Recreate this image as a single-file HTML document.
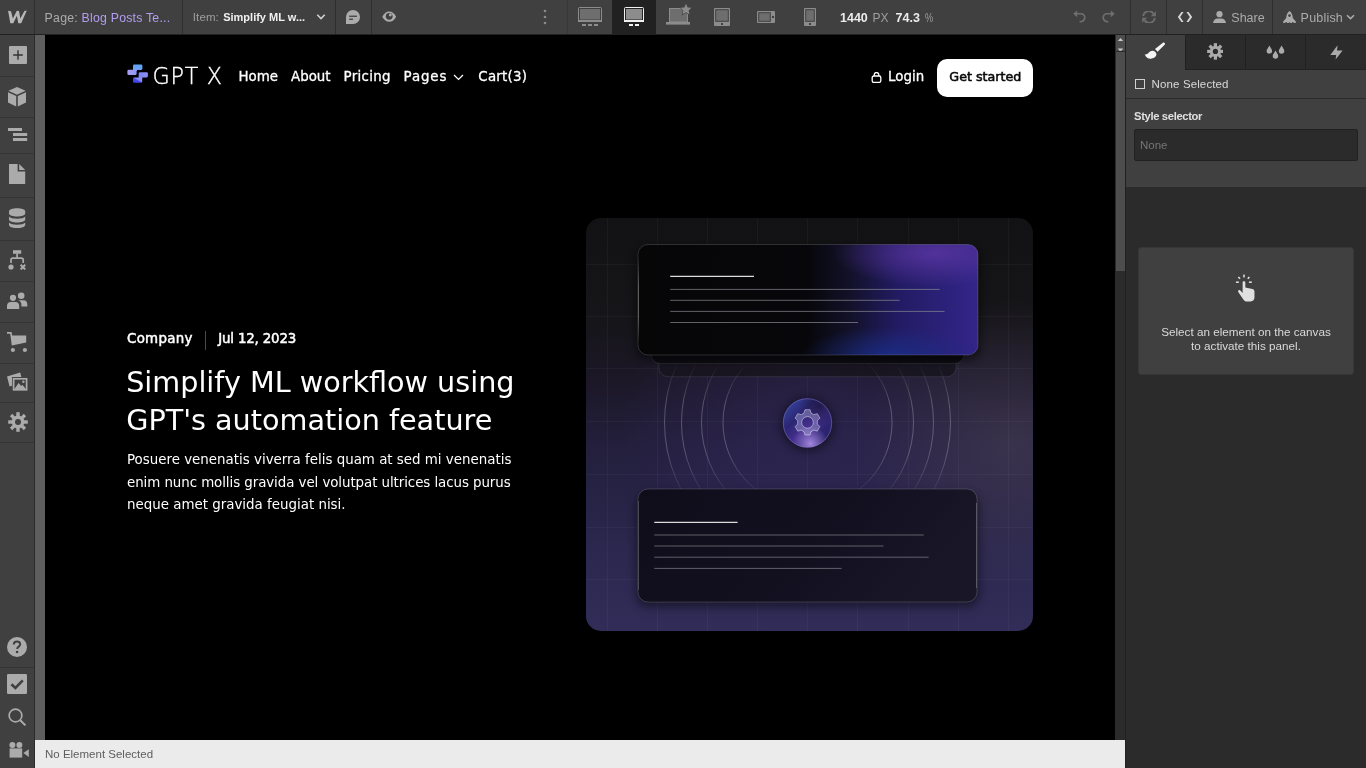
<!DOCTYPE html>
<html lang="en">
<head>
<meta charset="utf-8">
<title>Webflow Designer - Blog Posts Template</title>
<style>
*{box-sizing:border-box;margin:0;padding:0}
html,body{width:1366px;height:768px;overflow:hidden;background:#404040;font-family:"Liberation Sans",sans-serif;-webkit-font-smoothing:antialiased}
.abs{position:absolute}
#app{will-change:transform;position:relative;width:1366px;height:768px;overflow:hidden;background:#404040}
/* top bar */
#topbar{position:absolute;left:0;top:0;width:1366px;height:35px;background:#404040;border-bottom:1px solid #212121;z-index:5}
#topbar .sep{position:absolute;top:0;width:1px;height:34px;background:#2e2e2e}
#topbar .mid{position:absolute;left:372px;top:0;width:740px;height:34px;background:#464646}
.tb-text{position:absolute;top:0;height:34px;line-height:34px;font-size:13px;color:#d9d9d9;white-space:nowrap}
/* left bar */
#leftbar{position:absolute;left:0;top:35px;width:35px;height:733px;background:#404040;border-right:1px solid #2b2b2b;z-index:4}
#leftbar .div{position:absolute;left:0;width:34px;height:1px;background:#353535}
#leftbar svg{position:absolute}
#gutter{position:absolute;left:35px;top:35px;width:10px;height:705px;background:#5e5e5e}
/* canvas */
#canvas{position:absolute;left:45px;top:35px;width:1070px;height:705px;background:#000;overflow:hidden}
.site{font-family:"Liberation Sans",sans-serif;color:#fff}
.nav{top:30px;height:24px;line-height:24px;font-family:"DejaVu Sans",sans-serif;font-size:13.4px;color:#fff;white-space:nowrap;-webkit-text-stroke:0.3px #fff}
.meta{top:293px;height:22px;line-height:22px;font-family:"DejaVu Sans",sans-serif;font-size:13.4px;color:#fff;white-space:nowrap;-webkit-text-stroke:0.5px #fff}
/* scrollbar */
#vscroll{position:absolute;left:1115px;top:35px;width:11px;height:705px;background:#2b2b2b;border-left:1px solid #2b2b2b;border-right:1px solid #212121}
/* bottom bar */
#bottombar{position:absolute;left:35px;top:740px;width:1090px;height:28px;background:#ebebeb;color:#5e5e5e;font-size:11.5px;line-height:28px;padding-left:10px;z-index:4}
/* right panel */
#right{position:absolute;left:1126px;top:35px;width:240px;height:733px;background:#2b2b2b}
</style>
</head>
<body>
<div id="app">
<div id="topbar">
  <!-- W logo -->
  <svg class="abs" style="left:7px;top:10px" width="21" height="14" viewBox="0 0 21 14"><path d="M1.1 0.8 L3.3 13.2 L6.3 13.2 L9.9 5.8 L11.3 13.2 L14.2 13.2 L19.8 0.6 L17.4 0.9 L13.3 8.4 L12.0 1.1 L9.8 0.8 L5.9 8.4 L4.0 1.2 Z" fill="#b8b8b8"/></svg>
  <div class="sep" style="left:34px"></div>
  <div class="tb-text" style="left:44.6px;top:0.5px;color:#ababab;font-size:12.3px;letter-spacing:0.25px">Page:</div>
  <div class="tb-text" style="left:81.6px;top:0.5px;color:#b39df0;font-size:12.3px;letter-spacing:0.22px">Blog Posts Te...</div>
  <div class="sep" style="left:182px"></div>
  <div class="tb-text" style="left:192.8px;color:#9e9e9e;font-size:11.5px;letter-spacing:0.1px">Item:</div>
  <div class="tb-text" style="left:223.2px;color:#f0f0f0;font-size:11px;font-weight:bold">Simplify ML w...</div>
  <svg class="abs" style="left:316px;top:13px" width="10" height="8" viewBox="0 0 10 8"><path d="M1.3 1.8 L5 5.5 L8.7 1.8" fill="none" stroke="#d0d0d0" stroke-width="1.6"/></svg>
  <div class="sep" style="left:335px"></div>
  <!-- comment -->
  <svg class="abs" style="left:346px;top:10px" width="14" height="14" viewBox="0 0 14 14"><path d="M0 7 A7 7 0 1 1 7 14 L0 14 Z" fill="#ababab"/><rect x="3.2" y="5.6" width="7.8" height="1.3" fill="#404040"/><rect x="3.2" y="8.6" width="3.8" height="1.3" fill="#404040"/></svg>
  <div class="sep" style="left:371px"></div>
  <!-- eye -->
  <svg class="abs" style="left:382px;top:11.2px" width="14.4" height="11.4" viewBox="0 0 15 12"><path d="M0.2 6 C2.2 2.4 4.6 0.6 7.5 0.6 C10.4 0.6 12.8 2.4 14.8 6 C12.8 9.6 10.4 11.4 7.5 11.4 C4.6 11.4 2.2 9.6 0.2 6 Z" fill="#ababab"/><circle cx="7.5" cy="5.6" r="3.6" fill="#404040"/><circle cx="8.7" cy="4.2" r="1.5" fill="#ababab"/></svg>
  <!-- dots -->
  <svg class="abs" style="left:543px;top:9px" width="4" height="16" viewBox="0 0 4 16"><circle cx="2" cy="2" r="1.3" fill="#8a8a8a"/><circle cx="2" cy="8" r="1.3" fill="#8a8a8a"/><circle cx="2" cy="14" r="1.3" fill="#8a8a8a"/></svg>
  <div class="sep" style="left:567px;background:#383838"></div>
  <!-- bp1 large monitor -->
  <svg class="abs" style="left:578px;top:7px" width="24" height="19" viewBox="0 0 24 19"><rect x="0.5" y="0.5" width="23" height="14" rx="1" fill="#404040" stroke="#8c8c8c" stroke-width="1"/><rect x="2" y="2" width="20" height="10.5" fill="#6e6e6e"/><rect x="0" y="13" width="24" height="2" fill="#8c8c8c"/><rect x="4" y="17" width="4" height="2" fill="#8c8c8c"/><rect x="10" y="17" width="4" height="2" fill="#8c8c8c"/><rect x="16" y="17" width="4" height="2" fill="#8c8c8c"/></svg>
  <div class="abs" style="left:612px;top:0;width:44px;height:34px;background:#212121"></div>
  <svg class="abs" style="left:624px;top:7px" width="20" height="19" viewBox="0 0 20 19"><rect x="0.5" y="0.5" width="19" height="14" rx="1" fill="#212121" stroke="#f0f0f0" stroke-width="1"/><rect x="2" y="2" width="16" height="10.5" fill="#8c8c8c"/><rect x="0" y="13" width="20" height="2" fill="#f0f0f0"/><rect x="5" y="17" width="4" height="2" fill="#f0f0f0"/><rect x="11" y="17" width="4" height="2" fill="#f0f0f0"/></svg>
  <!-- bp3 laptop star -->
  <svg class="abs" style="left:666px;top:3px" width="26" height="22" viewBox="0 0 26 22"><rect x="3.5" y="5.5" width="18" height="13.5" fill="#6e6e6e" stroke="#8c8c8c"/><rect x="0" y="19" width="24" height="2.6" fill="#8c8c8c"/><path d="M20 0.8 L21.6 4.4 L25.4 4.8 L22.6 7.4 L23.4 11.2 L20 9.2 L16.6 11.2 L17.4 7.4 L14.6 4.8 L18.4 4.4 Z" fill="#8c8c8c" stroke="#404040" stroke-width="1.2" paint-order="stroke"/></svg>
  <!-- tablet -->
  <svg class="abs" style="left:714px;top:8px" width="16" height="18" viewBox="0 0 16 18"><rect x="0" y="0" width="16" height="18" rx="1" fill="#8c8c8c"/><rect x="1.2" y="1.2" width="13.6" height="12.6" fill="#404040"/><rect x="2.2" y="2.2" width="11.6" height="10.6" fill="#6e6e6e"/><rect x="7" y="15" width="2" height="2" fill="#404040"/></svg>
  <!-- phone landscape -->
  <svg class="abs" style="left:757px;top:11px" width="18" height="12" viewBox="0 0 18 12"><rect x="0" y="0" width="18" height="12" rx="1" fill="#8c8c8c"/><rect x="1.2" y="1.2" width="12.6" height="9.6" fill="#404040"/><rect x="2.2" y="2.2" width="10.6" height="7.6" fill="#6e6e6e"/><rect x="15" y="5" width="2" height="2" fill="#404040"/></svg>
  <!-- phone portrait -->
  <svg class="abs" style="left:804px;top:8px" width="12" height="18" viewBox="0 0 12 18"><rect x="0" y="0" width="12" height="18" rx="1" fill="#8c8c8c"/><rect x="1.2" y="1.2" width="9.6" height="12.6" fill="#404040"/><rect x="2.2" y="2.2" width="7.6" height="10.6" fill="#6e6e6e"/><rect x="5" y="15" width="2" height="2" fill="#404040"/></svg>

  <div class="tb-text" style="left:840px;top:1px;color:#ebebeb;font-weight:bold;font-size:12.5px">1440</div>
  <div class="tb-text" style="left:872.5px;top:1px;color:#9e9e9e;font-size:12px">PX</div>
  <div class="tb-text" style="left:895.5px;top:1px;color:#ebebeb;font-weight:bold;font-size:12.5px">74.3</div>
  <div class="tb-text" style="left:924.6px;top:1px;color:#9e9e9e;font-size:12px;transform:scaleX(0.76);transform-origin:left center">%</div>
  <!-- undo -->
  <svg class="abs" style="left:1073px;top:10px" width="13" height="13" viewBox="0 0 13 13"><path d="M4.2 0.4 L4.2 2.9 L7.6 2.9 C10.6 2.9 12.6 4.9 12.6 7.6 C12.6 10.4 10.6 12.6 7.4 12.6 L6.6 12.6 L6.6 10.9 L7.4 10.9 C9.6 10.9 10.9 9.5 10.9 7.6 C10.9 5.8 9.6 4.6 7.6 4.6 L4.2 4.6 L4.2 7.2 L0.2 3.8 Z" fill="#6e6e6e"/></svg>
  <svg class="abs" style="left:1102px;top:10px;transform:scaleX(-1)" width="13" height="13" viewBox="0 0 13 13"><path d="M4.2 0.4 L4.2 2.9 L7.6 2.9 C10.6 2.9 12.6 4.9 12.6 7.6 C12.6 10.4 10.6 12.6 7.4 12.6 L6.6 12.6 L6.6 10.9 L7.4 10.9 C9.6 10.9 10.9 9.5 10.9 7.6 C10.9 5.8 9.6 4.6 7.6 4.6 L4.2 4.6 L4.2 7.2 L0.2 3.8 Z" fill="#6e6e6e"/></svg>
  <div class="sep" style="left:1130px"></div>
  <!-- refresh -->
  <svg class="abs" style="left:1142px;top:11px" width="14" height="12" viewBox="0 0 14 12"><path d="M1.2 5.2 A5.6 5.6 0 0 1 11.4 2.6" fill="none" stroke="#6e6e6e" stroke-width="1.9"/><path d="M13.8 0.2 L13.8 5.2 L8.8 5.2 Z" fill="#6e6e6e"/><path d="M12.8 6.8 A5.6 5.6 0 0 1 2.6 9.4" fill="none" stroke="#6e6e6e" stroke-width="1.9"/><path d="M0.2 11.8 L0.2 6.8 L5.2 6.8 Z" fill="#6e6e6e"/></svg>
  <div class="sep" style="left:1166px"></div>
  <!-- code -->
  <svg class="abs" style="left:1177px;top:12px" width="16" height="10" viewBox="0 0 16 10"><path d="M4.4 0 L6.6 0 L3.2 5 L6.6 10 L4.4 10 L0.8 5 Z" fill="#d4d4d4"/><path d="M11.6 0 L9.4 0 L12.8 5 L9.4 10 L11.6 10 L15.2 5 Z" fill="#d4d4d4"/></svg>
  <div class="sep" style="left:1202px"></div>
  <!-- person -->
  <svg class="abs" style="left:1212.5px;top:10.5px" width="13" height="12.5" viewBox="0 0 13 12.5"><circle cx="6.5" cy="3.2" r="3.1" fill="#ababab"/><path d="M0 12.5 C0 9.4 2.2 7.4 4.6 7.4 L8.4 7.4 C10.8 7.4 13 9.4 13 12.5 Z" fill="#ababab"/></svg>
  <div class="tb-text" style="left:1231.3px;top:1px;color:#ababab;font-size:12.5px">Share</div>
  <div class="sep" style="left:1272px"></div>
  <!-- rocket -->
  <svg class="abs" style="left:1282.5px;top:10.5px" width="13" height="12.5" viewBox="0 0 13 12.5"><path d="M6.5 0 C8.6 1.6 9.8 4.2 9.8 7 L12.8 10.4 L12.8 12.5 L9.4 11 L8.4 12.5 L6.5 11.2 L4.6 12.5 L3.6 11 L0.2 12.5 L0.2 10.4 L3.2 7 C3.2 4.2 4.4 1.6 6.5 0 Z" fill="#ababab"/><circle cx="6.5" cy="4.6" r="1.3" fill="#404040"/></svg>
  <div class="tb-text" style="left:1300.6px;top:1px;color:#ababab;font-size:12.5px;letter-spacing:0.2px">Publish</div>
  <svg class="abs" style="left:1346px;top:14px" width="9" height="6" viewBox="0 0 9 6"><path d="M1 1.2 L4.5 4.6 L8 1.2" fill="none" stroke="#ababab" stroke-width="1.5"/></svg>

</div>

<div id="leftbar">
  <!-- coordinates inside leftbar: y = screenY - 35 -->
  <!-- plus -->
  <svg style="left:9px;top:11px" width="18" height="18" viewBox="0 0 18 18"><rect width="18" height="18" rx="1" fill="#ababab"/><path d="M9 4.2 V13.8 M4.2 9 H13.8" stroke="#333" stroke-width="1.4" fill="none"/></svg>
  <div class="div" style="top:41px"></div>
  <!-- cube -->
  <svg style="left:8px;top:52px" width="18" height="20" viewBox="0 0 18 20"><path d="M9 0 L17.6 3.8 L9 7.8 L0.4 3.8 Z" fill="#ababab"/><path d="M0 5.2 L8.2 9 L8.2 19.6 L0 15.4 Z" fill="#ababab"/><path d="M18 5.2 L9.8 9 L9.8 19.6 L18 15.4 Z" fill="#ababab"/></svg>
  <div class="div" style="top:82px"></div>
  <!-- navigator -->
  <svg style="left:8px;top:93px" width="20" height="13" viewBox="0 0 20 13"><rect x="0" y="0" width="14" height="3" fill="#ababab"/><rect x="5" y="5" width="14.2" height="3" fill="#ababab"/><rect x="5" y="10" width="14.2" height="3" fill="#ababab"/></svg>
  <div class="div" style="top:118px"></div>
  <!-- page -->
  <svg style="left:9px;top:129px" width="17" height="20" viewBox="0 0 17 20"><path d="M0 0 L8.6 0 L8.6 7.6 L16.2 7.6 L16.2 20 L0 20 Z" fill="#ababab"/><path d="M10.2 0 L16.2 6 L10.2 6 Z" fill="#ababab"/></svg>
  <div class="div" style="top:162px"></div>
  <!-- cms -->
  <svg style="left:9px;top:172.8px" width="17" height="20.6" viewBox="0 0 17 21" preserveAspectRatio="none"><path d="M0 3.4 C0 -0.9 16.2 -0.9 16.2 3.4 L16.2 5.6 C16.2 9.6 0 9.6 0 5.6 Z" fill="#ababab"/><path d="M0 8.6 C2 11.6 14.2 11.6 16.2 8.6 L16.2 11.8 C16.2 15.8 0 15.8 0 11.8 Z" fill="#ababab"/><path d="M0 14.8 C2 17.8 14.2 17.8 16.2 14.8 L16.2 17.4 C16.2 21.6 0 21.6 0 17.4 Z" fill="#ababab"/></svg>
  <div class="div" style="top:205px"></div>
  <!-- logic -->
  <svg style="left:8px;top:215px" width="19" height="20" viewBox="0 0 19 20"><rect x="5" y="0.2" width="8.2" height="3.6" fill="#ababab"/><path d="M9.1 3.8 V8 M3 13 V10 Q3 8.2 4.8 8.2 H13.4 Q15.2 8.2 15.2 10 V13" fill="none" stroke="#ababab" stroke-width="1.7"/><circle cx="3" cy="17" r="2.6" fill="#ababab"/><path d="M12.6 14.8 L17.2 19.4 M17.2 14.8 L12.6 19.4" stroke="#ababab" stroke-width="2" fill="none"/></svg>
  <div class="div" style="top:246px"></div>
  <!-- users -->
  <svg style="left:7px;top:257px" width="21" height="17" viewBox="0 0 21 17"><circle cx="14.2" cy="3.8" r="3.3" fill="#ababab"/><path d="M11.4 8.2 H16.6 C19 8.2 20.3 10 20.3 12.4 V14.6 H14.4 V12.6 C14.4 10.6 13.4 9 11.4 8.2 Z" fill="#ababab"/><circle cx="6" cy="5.8" r="3.1" fill="#ababab"/><path d="M0 17 V14 C0 11.4 1.6 10 3.6 10 H8.6 C10.6 10 12.2 11.4 12.2 14 V17 Z" fill="#ababab"/></svg>
  <div class="div" style="top:287px"></div>
  <!-- cart -->
  <svg style="left:7px;top:297px" width="21" height="21" viewBox="0 0 21 21"><path d="M0 0 H4.6 L5.2 3.4 H19.2 V10.6 L4.8 13.4 L3.2 1.8 H0 Z" fill="#ababab"/><circle cx="5.9" cy="18" r="2.1" fill="#ababab"/><circle cx="17.9" cy="18" r="2.1" fill="#ababab"/></svg>
  <div class="div" style="top:328px"></div>
  <!-- assets -->
  <svg style="left:7px;top:337px" width="21" height="19" viewBox="0 0 21 19"><path d="M0 4.6 L13.2 0.6 L14.4 5 H5 V13.8 L2.6 14.4 Z" fill="#ababab"/><rect x="6.6" y="6.8" width="13" height="11" fill="none" stroke="#ababab" stroke-width="1.7"/><path d="M7.4 17 L11.6 11 L14.2 14 L15.4 12.8 L18.8 17 Z" fill="#ababab"/><circle cx="16.4" cy="9.8" r="1.2" fill="#ababab"/></svg>
  <div class="div" style="top:367px"></div>
  <!-- gear -->
  <svg style="left:7.6px;top:376.5px" width="20" height="20" viewBox="-10 -10 20 20"><g fill="#ababab"><circle r="6.4"/><g id="tooth"><rect x="-1.7" y="-9.8" width="3.4" height="5" /></g><use href="#tooth" transform="rotate(45)"/><use href="#tooth" transform="rotate(90)"/><use href="#tooth" transform="rotate(135)"/><use href="#tooth" transform="rotate(180)"/><use href="#tooth" transform="rotate(225)"/><use href="#tooth" transform="rotate(270)"/><use href="#tooth" transform="rotate(315)"/></g><circle r="3" fill="#404040"/></svg>
  <div class="div" style="top:407px"></div>
  <!-- help -->
  <svg style="left:7px;top:602px" width="20" height="20" viewBox="0 0 20 20"><circle cx="10" cy="10" r="10" fill="#ababab"/><path d="M6.8 7.6 C6.8 5.6 8.2 4.4 10 4.4 C11.9 4.4 13.2 5.6 13.2 7.3 C13.2 9.6 10.2 9.6 10.2 12" fill="none" stroke="#404040" stroke-width="2"/><circle cx="10.1" cy="15" r="1.3" fill="#404040"/></svg>
  <div class="div" style="top:632px"></div>
  <!-- check -->
  <svg style="left:7px;top:639px" width="20" height="20" viewBox="0 0 20 20"><rect width="20" height="20" rx="1.2" fill="#ababab"/><path d="M4.4 10.2 L8.4 14 L15.8 6.4" fill="none" stroke="#404040" stroke-width="2.6"/></svg>
  <!-- search -->
  <svg style="left:6.8px;top:672px" width="20" height="20" viewBox="0 0 20 20"><circle cx="8.5" cy="8.5" r="6.35" fill="none" stroke="#ababab" stroke-width="1.7"/><path d="M13 13 L18.4 18.4" stroke="#ababab" stroke-width="2" fill="none"/></svg>
  <!-- video -->
  <svg style="left:9px;top:706.5px" width="20" height="16" viewBox="0 0 20 16"><circle cx="3.4" cy="3" r="3" fill="#ababab"/><circle cx="10.4" cy="3" r="3" fill="#ababab"/><rect x="0.6" y="6.4" width="12.6" height="9.2" fill="#ababab"/><path d="M14.4 11 L19.8 7.2 V15 Z" fill="#ababab"/></svg>
</div>

<div id="gutter"></div>
<div id="canvas" class="site">
  <!-- coordinates: screen - (45,35) -->
  <!-- logo -->
  <svg class="abs" style="left:82px;top:29px" width="22" height="20" viewBox="0 0 22 20">
    <defs>
      <linearGradient id="lgB" x1="0" y1="0" x2="1" y2="0"><stop offset="0" stop-color="#ac9cf4"/><stop offset="1" stop-color="#8e98f4"/></linearGradient>
      <linearGradient id="lgC" x1="0" y1="0" x2="1" y2="0"><stop offset="0" stop-color="#7a84f2"/><stop offset="1" stop-color="#8a90f4"/></linearGradient>
      <linearGradient id="lgD" x1="0" y1="1" x2="1" y2="0"><stop offset="0" stop-color="#3436ee"/><stop offset="0.45" stop-color="#4a4cf0"/><stop offset="0.6" stop-color="#8a8cf4"/><stop offset="1" stop-color="#8c92f4"/></linearGradient>
    </defs>
    <rect x="6" y="0.5" width="9.4" height="5.4" rx="1.3" fill="#62a3f4"/>
    <rect x="6" y="4" width="4" height="3" fill="#7a9cf4"/>
    <rect x="0.4" y="5.8" width="9.2" height="5.2" rx="1.3" fill="url(#lgB)"/>
    <rect x="11.7" y="8.2" width="9.2" height="5.2" rx="1.3" fill="url(#lgC)"/>
    <rect x="11.7" y="11.8" width="3.6" height="3" fill="#8388f3"/>
    <rect x="6" y="13.5" width="9.2" height="5.2" rx="1.3" fill="url(#lgD)"/>
  </svg>
  <div class="abs" id="gptx" style="left:107.6px;letter-spacing:0.75px;top:24px;font-family:'DejaVu Sans',sans-serif;font-weight:200;font-size:22.2px;line-height:34px;white-space:nowrap;-webkit-text-stroke:0.38px #fff">GPT X</div>
  <div class="abs nav" id="n1" style="left:193.5px">Home</div>
  <div class="abs nav" id="n2" style="left:246px">About</div>
  <div class="abs nav" id="n3" style="left:298.6px;letter-spacing:0.28px">Pricing</div>
  <div class="abs nav" id="n4" style="left:358.6px;letter-spacing:0.85px">Pages</div>
  <svg class="abs" style="left:408px;top:38.5px" width="11" height="7" viewBox="0 0 11 7"><path d="M1 1 L5.5 5.4 L10 1" fill="none" stroke="#fff" stroke-width="1.3"/></svg>
  <div class="abs nav" id="n5" style="left:433.3px;letter-spacing:0.25px">Cart(3)</div>
  <!-- lock -->
  <svg class="abs" style="left:826px;top:37px" width="11" height="11" viewBox="0 0 11 11"><rect x="1.2" y="4" width="8.6" height="6.4" rx="1.6" fill="none" stroke="#fff" stroke-width="1.3"/><path d="M3.2 4 V2.8 A2.3 2.3 0 0 1 7.8 2.8 V4" fill="none" stroke="#fff" stroke-width="1.3"/></svg>
  <div class="abs nav" id="n6" style="left:843px">Login</div>
  <div class="abs" style="left:891.5px;top:24px;width:96.5px;height:38px;background:#fff;border-radius:10px"></div>
  <div class="abs nav" id="n7" style="left:904.3px;top:29.6px;color:#0a0a0a;-webkit-text-stroke:0.55px #0a0a0a;font-size:12.7px">Get started</div>

  <div class="abs meta" id="m1" style="left:82px;letter-spacing:0.28px">Company</div>
  <div class="abs" style="left:160px;top:296px;width:1px;height:18.5px;background:#4a4a4a"></div>
  <div class="abs meta" id="m2" style="left:173.2px;letter-spacing:-0.18px">Jul 12, 2023</div>
  <div class="abs" id="h1" style="left:81.2px;top:328px;font-family:'DejaVu Sans',sans-serif;font-size:28.65px;line-height:38.1px;white-space:nowrap;color:#fff">Simplify ML workflow using<br>GPT's automation feature</div>
  <div class="abs" id="para" style="left:82px;top:414px;font-family:'DejaVu Sans',sans-serif;font-size:13.4px;line-height:22.7px;white-space:nowrap;color:#fff">Posuere venenatis viverra felis quam at sed mi venenatis<br><span style="letter-spacing:-0.07px">enim nunc mollis gravida vel volutpat ultrices lacus purus</span><br>neque amet gravida feugiat nisi.</div>
  <svg class="abs" id="hero" style="left:541px;top:183px" width="447" height="413" viewBox="0 0 447 413">
    <defs>
      <clipPath id="hclip"><rect width="447" height="413" rx="15"/></clipPath>
      <linearGradient id="hbg" x1="0" y1="0" x2="0" y2="1">
        <stop offset="0" stop-color="#121214"/>
        <stop offset="0.25" stop-color="#161519"/>
        <stop offset="0.4" stop-color="#1c1828"/>
        <stop offset="0.55" stop-color="#231f3c"/>
        <stop offset="0.8" stop-color="#2b274e"/>
        <stop offset="1" stop-color="#312d58"/>
      </linearGradient>
      <radialGradient id="hglow" cx="0.5" cy="0.52" r="0.42">
        <stop offset="0" stop-color="#30285a" stop-opacity="0.6"/>
        <stop offset="1" stop-color="#3a2a6a" stop-opacity="0"/>
      </radialGradient>
      <radialGradient id="hglow2" cx="0.95" cy="0.55" r="0.35">
        <stop offset="0" stop-color="#4a4058" stop-opacity="0.6"/>
        <stop offset="1" stop-color="#4a4058" stop-opacity="0"/>
      </radialGradient>
      <linearGradient id="arcfade" x1="0" y1="0" x2="0" y2="413" gradientUnits="userSpaceOnUse">
        <stop offset="0.35" stop-color="#fff" stop-opacity="0"/>
        <stop offset="0.45" stop-color="#fff" stop-opacity="0.3"/>
        <stop offset="0.56" stop-color="#fff" stop-opacity="0.3"/>
        <stop offset="0.7" stop-color="#fff" stop-opacity="0"/>
      </linearGradient>
      <linearGradient id="c1bg" x1="0" y1="0" x2="1" y2="0">
        <stop offset="0" stop-color="#060607"/>
        <stop offset="0.5" stop-color="#07070b"/>
        <stop offset="0.62" stop-color="#121128"/>
        <stop offset="0.76" stop-color="#221b62"/>
        <stop offset="1" stop-color="#33258a"/>
      </linearGradient>
      <radialGradient id="c1p" cx="0.87" cy="0.08" r="0.3">
        <stop offset="0" stop-color="#57349e" stop-opacity="0.9"/>
        <stop offset="1" stop-color="#57349e" stop-opacity="0"/>
      </radialGradient>
      <radialGradient id="c1b" cx="0.74" cy="1" r="0.26">
        <stop offset="0" stop-color="#1a2e88" stop-opacity="0.85"/>
        <stop offset="1" stop-color="#1a2e88" stop-opacity="0"/>
      </radialGradient>
      <linearGradient id="c2bg" x1="0" y1="0" x2="1" y2="0.3">
        <stop offset="0" stop-color="#100d1b"/>
        <stop offset="0.6" stop-color="#120f1f"/>
        <stop offset="1" stop-color="#191628"/>
      </linearGradient>
      <linearGradient id="edgefade" x1="0" y1="40" x2="0" y2="124" gradientUnits="userSpaceOnUse">
        <stop offset="0" stop-color="#fff" stop-opacity="0"/>
        <stop offset="0.35" stop-color="#fff" stop-opacity="0.3"/>
        <stop offset="0.7" stop-color="#fff" stop-opacity="0.3"/>
        <stop offset="1" stop-color="#fff" stop-opacity="0"/>
      </linearGradient>
      <linearGradient id="c1stroke" x1="0" y1="0" x2="1" y2="0">
        <stop offset="0" stop-color="#fff" stop-opacity="0.45"/>
        <stop offset="0.1" stop-color="#fff" stop-opacity="0.18"/>
        <stop offset="1" stop-color="#fff" stop-opacity="0.12"/>
      </linearGradient>
      <linearGradient id="disc" x1="0.1" y1="0.1" x2="0.9" y2="0.9">
        <stop offset="0" stop-color="#34439c"/>
        <stop offset="0.3" stop-color="#2c2672"/>
        <stop offset="0.55" stop-color="#46308e"/>
        <stop offset="0.8" stop-color="#2c2470"/>
        <stop offset="1" stop-color="#2a2268"/>
      </linearGradient>
      <radialGradient id="discHi" cx="0.56" cy="0.92" r="0.36">
        <stop offset="0" stop-color="#a88ae4" stop-opacity="0.95"/>
        <stop offset="1" stop-color="#a88ae4" stop-opacity="0"/>
      </radialGradient>
      <radialGradient id="discBl" cx="0.75" cy="0.15" r="0.4">
        <stop offset="0" stop-color="#1c1842" stop-opacity="0.85"/>
        <stop offset="1" stop-color="#1c1842" stop-opacity="0"/>
      </radialGradient>
      <filter id="sh" x="-20%" y="-20%" width="140%" height="150%"><feGaussianBlur stdDeviation="5"/></filter>
    </defs>
    <g clip-path="url(#hclip)">
      <rect width="447" height="413" fill="url(#hbg)"/>
      <rect width="447" height="413" fill="url(#hglow)"/>
      <rect width="447" height="413" fill="url(#hglow2)"/>
      <!-- grid -->
      <g stroke="#fff" stroke-opacity="0.035" stroke-width="1">
        <path d="M21.5 0V413M71.5 0V413M121.5 0V413M171.5 0V413M221.5 0V413M271.5 0V413M322.5 0V413M372.5 0V413M422.5 0V413"/>
        <path d="M0 46.5H447M0 98.5H447M0 150.5H447M0 203.5H447M0 256.5H447M0 309.5H447M0 361.5H447"/>
      </g>
      <!-- stacked layers -->
      <rect x="73" y="60" width="297" height="98.7" rx="9" fill="#17151f" fill-opacity="0.9" stroke="#fff" stroke-opacity="0.09"/>
      <rect x="65" y="50" width="313" height="95.4" rx="9" fill="#0d0c12" stroke="#fff" stroke-opacity="0.1"/>
      <!-- arcs -->
      <g fill="none" stroke="url(#arcfade)" stroke-width="0.8">
        <circle cx="221.5" cy="204.5" r="84.5"/><circle cx="221.5" cy="204.5" r="106"/><circle cx="221.5" cy="204.5" r="126"/><circle cx="221.5" cy="204.5" r="143"/>
      </g>
      <!-- card 1 -->
      <rect x="50" y="30" width="344" height="112" rx="12" fill="#000" opacity="0.5" filter="url(#sh)"/>
      <rect x="52" y="26.5" width="340" height="110.5" rx="10" fill="url(#c1bg)"/>
      <rect x="52" y="26.5" width="340" height="110.5" rx="10" fill="url(#c1b)"/>
      <rect x="52" y="26.5" width="340" height="110.5" rx="10" fill="url(#c1p)"/>
      <rect x="52" y="26.5" width="340" height="110.5" rx="10" fill="none" stroke="#fff" stroke-opacity="0.15"/>
      <path d="M52.5 40 V124" stroke="url(#edgefade)" stroke-width="1"/>
      <path d="M84.2 58.4H168" stroke="#dcdcdc" stroke-width="1.3"/>
      <path d="M84.2 71.4H353.6M84.2 82.3H313.6M84.2 93.4H358.6M84.2 104.5H272" stroke="#8a8992" stroke-opacity="0.7" stroke-width="1"/>
      <!-- gear disc -->
      <circle cx="221.5" cy="206.5" r="27" fill="#000" opacity="0.45" filter="url(#sh)"/>
      <circle cx="221.5" cy="204.9" r="24.7" fill="url(#disc)"/>
      <circle cx="221.5" cy="204.9" r="24.7" fill="url(#discBl)"/>
      <circle cx="221.5" cy="204.9" r="24.7" fill="url(#discHi)"/>
      <circle cx="221.5" cy="204.9" r="24.2" fill="none" stroke="#8a7ac8" stroke-opacity="0.45"/>
      <g transform="translate(221.5 204.9) scale(0.98)" fill="#b4b4e0" fill-opacity="0.4" stroke="#dcd8f4" stroke-opacity="0.7" stroke-width="0.8">
        <path fill-rule="evenodd" d="M-2.6 -13.4 H2.6 L3.6 -10 L6.4 -8.4 L10 -9.4 L12.6 -4.8 L10 -2.2 V1.2 L12.6 3.8 L10 8.4 L6.4 7.4 L3.6 9 L2.6 12.4 H-2.6 L-3.6 9 L-6.4 7.4 L-10 8.4 L-12.6 3.8 L-10 1.2 V-2.2 L-12.6 -4.8 L-10 -9.4 L-6.4 -8.4 L-3.6 -10 Z M0 -6.4 A5.9 5.9 0 1 0 0 5.4 A5.9 5.9 0 1 0 0 -6.4 Z"/>
      </g>
      <!-- card 2 -->
      <rect x="50" y="275" width="343" height="114" rx="12" fill="#000" opacity="0.45" filter="url(#sh)"/>
      <rect x="52" y="271" width="339" height="113" rx="10" fill="url(#c2bg)" stroke="#fff" stroke-opacity="0.16"/>
      <path d="M390.5 285 V370" stroke="#fff" stroke-opacity="0.22" stroke-width="1"/>
      <path d="M52.5 283 V372" stroke="#fff" stroke-opacity="0.18" stroke-width="1"/>
      <path d="M68.3 304.3H151.6" stroke="#dcdcdc" stroke-width="1.3"/>
      <path d="M68.3 317H337.8M68.3 328H297.5M68.3 339.2H342.7M68.3 350.4H255.6" stroke="#6a6872" stroke-opacity="0.9" stroke-width="1"/>
    </g>
  </svg>

</div>

<!--SCROLL-->
<div id="vscroll">
  <div class="abs" style="left:0;top:0;width:9px;height:16px;background:#4d4d4d"></div>
  <svg class="abs" style="left:0;top:0" width="9" height="17" viewBox="0 0 9 17"><path d="M4.5 3 L7.2 6 H1.8 Z" fill="#c8c8c8"/><path d="M1.8 13.4 H7.2 L5.4 15.7 H3.6 Z" fill="#c8c8c8"/></svg>
  <div class="abs" style="left:0;top:17px;width:9px;height:219px;background:#4d4d4d"></div>
</div>
<div id="right">
  <div class="abs" style="left:0;top:0;width:240px;height:152px;background:#404040"></div>
  <!-- tabs -->
  <div class="abs" style="left:59px;top:0;width:181px;height:35px;background:#2b2b2b;border-bottom:1px solid #212121;border-left:1px solid #212121"></div>
  <div class="abs" style="left:119px;top:0;width:1px;height:34px;background:#212121"></div>
  <div class="abs" style="left:179px;top:0;width:1px;height:34px;background:#212121"></div>
  <!-- brush -->
  <svg class="abs" style="left:18px;top:7px" width="22" height="18" viewBox="0 0 22 18"><path d="M18.6 0.9 C19.4 0.2 20.6 0.6 21 1.4 C21.2 2 21 2.4 20.6 2.8 L13.6 9.7 L11 7 Z" fill="#f5f5f5"/><path d="M0.8 12.4 C2.2 12.7 3.6 12 4.6 10.8 C5.8 9.4 7.8 8.5 9.6 9 C11.4 9.5 12.6 11 12.4 12.8 C12.1 15.2 9.4 16.8 6.4 16.7 C3.8 16.6 1.6 14.8 0.8 12.4 Z" fill="#f5f5f5"/></svg>
  <!-- gear -->
  <svg class="abs" style="left:80.6px;top:8.4px" width="16.8" height="16.8" viewBox="-10 -10 20 20"><g fill="#ababab"><circle r="6.6"/><rect id="t2" x="-1.9" y="-9.8" width="3.8" height="5"/><use href="#t2" transform="rotate(45)"/><use href="#t2" transform="rotate(90)"/><use href="#t2" transform="rotate(135)"/><use href="#t2" transform="rotate(180)"/><use href="#t2" transform="rotate(225)"/><use href="#t2" transform="rotate(270)"/><use href="#t2" transform="rotate(315)"/></g><circle r="3.1" fill="#2b2b2b"/></svg>
  <!-- drops -->
  <svg class="abs" style="left:140px;top:9.8px" width="20" height="15" viewBox="0 0 20 15"><path id="dr" d="M3.4 0.4 C4.8 3 6.1 4.4 6.1 5.9 A2.75 2.75 0 0 1 0.6 5.9 C0.6 4.4 2 3 3.4 0.4 Z" fill="#ababab"/><use href="#dr" x="12.2"/><use href="#dr" x="6.1" y="5"/></svg>
  <!-- bolt -->
  <svg class="abs" style="left:203.5px;top:9.5px" width="13" height="15" viewBox="0 0 13 15"><path d="M7.6 0.3 L0.3 10 H6.2 L5.6 14.5 L12.6 5.4 H7 Z" fill="#ababab"/></svg>
  <!-- none selected -->
  <div class="abs" style="left:9px;top:44px;width:10px;height:10px;border:1px solid #d0d0d0"></div>
  <div class="abs" id="nonesel" style="left:25.6px;top:35px;letter-spacing:0.12px;height:29px;line-height:29px;font-size:11.5px;color:#d9d9d9;white-space:nowrap">None Selected</div>
  <div class="abs" style="left:0;top:63px;width:240px;height:1px;background:#2b2b2b"></div>
  <div class="abs" id="stylesel" style="left:8px;top:72px;height:18px;line-height:18px;font-size:11.2px;letter-spacing:-0.33px;font-weight:bold;color:#e0e0e0;white-space:nowrap">Style selector</div>
  <div class="abs" style="left:8px;top:94px;width:224px;height:32px;background:#2b2b2b;border:1px solid #212121;border-radius:2px"></div>
  <div class="abs" id="nonetxt" style="left:14px;top:94px;height:32px;line-height:32px;font-size:11.5px;color:#757575">None</div>
  <!-- card -->
  <div class="abs" style="left:12px;top:212px;width:216px;height:128px;background:#404040;border:1px solid #363636;border-radius:3px"></div>
  <!-- hand -->
  <svg class="abs" style="left:108.8px;top:238.6px" width="21" height="29" viewBox="0 0 22 30"><g fill="#e0e0e0"><rect x="8.6" y="0.4" width="1.6" height="3"/><rect x="3.6" y="2.6" width="1.6" height="2.6" transform="rotate(-40 4.4 3.9)"/><rect x="13.4" y="2.6" width="1.6" height="2.6" transform="rotate(40 14.2 3.9)"/><rect x="1" y="7.6" width="3" height="1.6"/><rect x="14.6" y="7.6" width="3" height="1.6"/><path d="M8 8.4 C8 7.2 10.8 7.2 10.8 8.4 V14 L18.2 15.6 C19.6 16 20.4 16.8 20.4 18.4 V24 C20.4 27 18.8 28.6 16.4 28.6 H12.6 C10.8 28.6 9.6 27.8 8.6 26.2 L3.4 18.6 C2.6 17.2 4.4 16 5.6 17 L8 19.6 Z"/></g></svg>
  <div class="abs" id="hint" style="left:12px;top:290px;width:216px;text-align:center;font-size:11.7px;line-height:14px;color:#d9d9d9">Select an element on the canvas<br>to activate this panel.</div>
</div>

<div id="bottombar">No Element Selected</div>
<div class="abs" style="left:1125px;top:740px;width:1px;height:28px;background:#212121;z-index:5"></div>
</div>
</body>
</html>
